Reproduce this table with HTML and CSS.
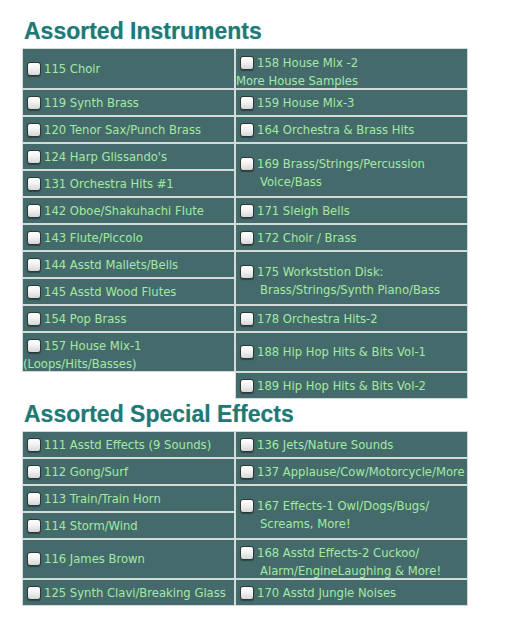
FILE: index.html
```html
<!DOCTYPE html>
<html>
<head>
<meta charset="utf-8">
<link rel="stylesheet" href="styles.css">
</head>
<body>
<div class="page">
  <h2 class="title first">Assorted Instruments</h2>
  <div class="grid g1">
    <div class="cell"><div class="item"><span class="cb"></span><span class="t">115 Choir</span></div></div>
    <div class="cell stack"><div class="item"><span class="cb"></span><span class="t">158 House Mix -2</span></div><div class="t">More House Samples</div></div>
    <div class="cell"><div class="item"><span class="cb"></span><span class="t">119 Synth Brass</span></div></div>
    <div class="cell"><div class="item"><span class="cb"></span><span class="t">159 House Mix-3</span></div></div>
    <div class="cell"><div class="item"><span class="cb"></span><span class="t">120 Tenor Sax/Punch Brass</span></div></div>
    <div class="cell"><div class="item"><span class="cb"></span><span class="t">164 Orchestra &amp; Brass Hits</span></div></div>
    <div class="cell"><div class="item"><span class="cb"></span><span class="t">124 Harp Glissando's</span></div></div>
    <div class="cell two span2"><div class="item"><span class="cb"></span><span class="t">169 Brass/Strings/Percussion<span class="l2">Voice/Bass</span></span></div></div>
    <div class="cell"><div class="item"><span class="cb"></span><span class="t">131 Orchestra Hits #1</span></div></div>
    <div class="cell"><div class="item"><span class="cb"></span><span class="t">142 Oboe/Shakuhachi Flute</span></div></div>
    <div class="cell"><div class="item"><span class="cb"></span><span class="t">171 Sleigh Bells</span></div></div>
    <div class="cell"><div class="item"><span class="cb"></span><span class="t">143 Flute/Piccolo</span></div></div>
    <div class="cell"><div class="item"><span class="cb"></span><span class="t">172 Choir / Brass</span></div></div>
    <div class="cell"><div class="item"><span class="cb"></span><span class="t">144 Asstd Mallets/Bells</span></div></div>
    <div class="cell two span2"><div class="item"><span class="cb"></span><span class="t">175 Workststion Disk:<span class="l2">Brass/Strings/Synth Piano/Bass</span></span></div></div>
    <div class="cell"><div class="item"><span class="cb"></span><span class="t">145 Asstd Wood Flutes</span></div></div>
    <div class="cell"><div class="item"><span class="cb"></span><span class="t">154 Pop Brass</span></div></div>
    <div class="cell"><div class="item"><span class="cb"></span><span class="t">178 Orchestra Hits-2</span></div></div>
    <div class="cell stack"><div class="item"><span class="cb"></span><span class="t">157 House Mix-1</span></div><div class="t">(Loops/Hits/Basses)</div></div>
    <div class="cell"><div class="item"><span class="cb"></span><span class="t">188 Hip Hop Hits &amp; Bits Vol-1</span></div></div>
    <div class="cell col2"><div class="item"><span class="cb"></span><span class="t">189 Hip Hop Hits &amp; Bits Vol-2</span></div></div>
  </div>

  <h2 class="title second">Assorted Special Effects</h2>
  <div class="grid g2">
    <div class="cell"><div class="item"><span class="cb"></span><span class="t">111 Asstd Effects (9 Sounds)</span></div></div>
    <div class="cell"><div class="item"><span class="cb"></span><span class="t">136 Jets/Nature Sounds</span></div></div>
    <div class="cell"><div class="item"><span class="cb"></span><span class="t">112 Gong/Surf</span></div></div>
    <div class="cell"><div class="item"><span class="cb"></span><span class="t">137 Applause/Cow/Motorcycle/More</span></div></div>
    <div class="cell"><div class="item"><span class="cb"></span><span class="t">113 Train/Train Horn</span></div></div>
    <div class="cell two span2"><div class="item"><span class="cb"></span><span class="t">167 Effects-1 Owl/Dogs/Bugs/<span class="l2">Screams, More!</span></span></div></div>
    <div class="cell"><div class="item"><span class="cb"></span><span class="t">114 Storm/Wind</span></div></div>
    <div class="cell"><div class="item"><span class="cb"></span><span class="t">116 James Brown</span></div></div>
    <div class="cell two"><div class="item"><span class="cb"></span><span class="t">168 Asstd Effects-2 Cuckoo/<span class="l2">Alarm/EngineLaughing &amp; More!</span></span></div></div>
    <div class="cell"><div class="item"><span class="cb"></span><span class="t">125 Synth Clavi/Breaking Glass</span></div></div>
    <div class="cell"><div class="item"><span class="cb"></span><span class="t">170 Asstd Jungle Noises</span></div></div>
  </div>
</div>
</body>
</html>
```
FILE: styles.css
```css
html, body {
  margin: 0;
  padding: 0;
  background: #ffffff;
}

.page {
  padding: 18px 0 0 22px;
}

.title {
  margin: 0;
  padding-left: 2px;
  font-family: "Liberation Sans", Arial, sans-serif;
  font-weight: bold;
  font-size: 23px;
  line-height: 26px;
  color: #1f7a77;
  text-shadow: 0 0 1px rgba(31, 122, 119, 0.45);
}

.title.first {
  margin-bottom: 4px;
}

.title.second {
  margin-top: 2px;
  margin-bottom: 4px;
}

.grid {
  display: grid;
  grid-template-columns: 213px 233px;
  font-family: "DejaVu Sans", Verdana, sans-serif;
  font-size: 11.6px;
  color: #a2eaa2;
}

.g1 {
  grid-template-rows: 41px 27px 27px 27px 27px 27px 27px 27px 27px 27px 40px 27px;
}

.g2 {
  grid-template-rows: 27px 27px 27px 27px 40px 27px;
}

.cell {
  display: flex;
  align-items: center;
  border: 1px solid #d2dada;
  background: #456a6b;
  overflow: hidden;
  min-width: 0;
}

.span2 {
  grid-row: span 2;
}

.col2 {
  grid-column: 2;
}

.item {
  display: flex;
  align-items: flex-start;
}

.cb {
  flex: none;
  box-sizing: border-box;
  width: 14px;
  height: 14px;
  margin: 2px 3px 0 4px;
  border: 1px solid #2c3838;
  border-radius: 3px;
  background: linear-gradient(#ffffff 0%, #f2f2f2 45%, #d6d6d6 100%);
  box-shadow: 0 1px 1px rgba(0, 0, 0, 0.35);
}

.t {
  line-height: 18px;
  white-space: nowrap;
}

.l2 {
  display: block;
  padding-left: 3px;
}

.cell.two .item {
  padding-top: 6px;
}

.cell.stack {
  flex-direction: column;
  align-items: flex-start;
  justify-content: center;
  padding-top: 6px;
}
```
